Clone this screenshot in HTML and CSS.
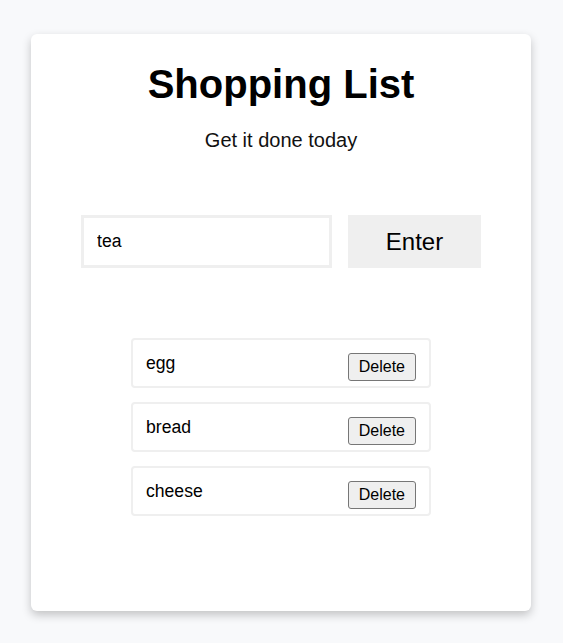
FILE: index.html
```html
<!DOCTYPE html>
<html lang="en">
<head>
<meta charset="utf-8">
<title>Shopping List</title>
<link rel="stylesheet" href="styles.css">
</head>
<body>
<main class="card">
  <h1 class="title">Shopping List</h1>
  <p class="subtitle">Get it done today</p>
  <form class="entry">
    <input class="entry-input" type="text" value="tea">
    <button class="entry-button" type="button">Enter</button>
  </form>
  <ul class="list">
    <li class="item"><span class="item-text">egg</span><button class="delete" type="button">Delete</button></li>
    <li class="item"><span class="item-text">bread</span><button class="delete" type="button">Delete</button></li>
    <li class="item"><span class="item-text">cheese</span><button class="delete" type="button">Delete</button></li>
  </ul>
</main>
</body>
</html>
```

FILE: styles.css
```css
html, body {
  margin: 0;
  padding: 0;
}
body {
  background: #f8f9fb;
  font-family: "Liberation Sans", Arial, sans-serif;
  color: #000;
  padding-top: 34px;
}
.card {
  box-sizing: border-box;
  width: 500px;
  margin: 0 0 20px 31px;
  background: #fff;
  border-radius: 6px;
  box-shadow: 0 4px 10px rgba(0, 0, 0, 0.22);
  padding: 27px 0 95px 0;
  display: flex;
  flex-direction: column;
  align-items: center;
}
.title {
  margin: 0;
  font-size: 40px;
  font-weight: bold;
  line-height: 46px;
  text-align: center;
}
.subtitle {
  margin: 22px 0 0 0;
  font-size: 20px;
  line-height: 23px;
  color: #111;
}
.entry {
  margin: 63px 0 0 0;
  display: flex;
  gap: 16px;
}
.entry-input {
  box-sizing: border-box;
  width: 251px;
  height: 53px;
  border: 3px solid #efefef;
  padding: 0 13px;
  font-family: inherit;
  font-size: 17.6px;
  color: #000;
  outline: none;
  background: #fff;
  margin: 0;
}
.entry-button {
  box-sizing: border-box;
  width: 133px;
  height: 53px;
  border: none;
  background: #efefef;
  font-family: inherit;
  font-size: 24px;
  color: #000;
  margin: 0;
  padding: 0;
}
.list {
  list-style: none;
  margin: 70px 0 0 0;
  padding: 0;
  display: flex;
  flex-direction: column;
  gap: 14px;
}
.item {
  box-sizing: border-box;
  width: 300px;
  height: 50px;
  border: 2px solid #efefef;
  border-radius: 4px;
  padding: 0 13px;
  display: flex;
  align-items: center;
  justify-content: space-between;
}
.item-text {
  font-size: 17.6px;
}
.delete {
  margin: 8px 0 0 0;
  font-family: inherit;
  font-size: 16px;
  line-height: 18px;
  padding: 4px 10px;
  border: 1px solid #767676;
  border-radius: 3px;
  background: #efefef;
  color: #000;
}
```
